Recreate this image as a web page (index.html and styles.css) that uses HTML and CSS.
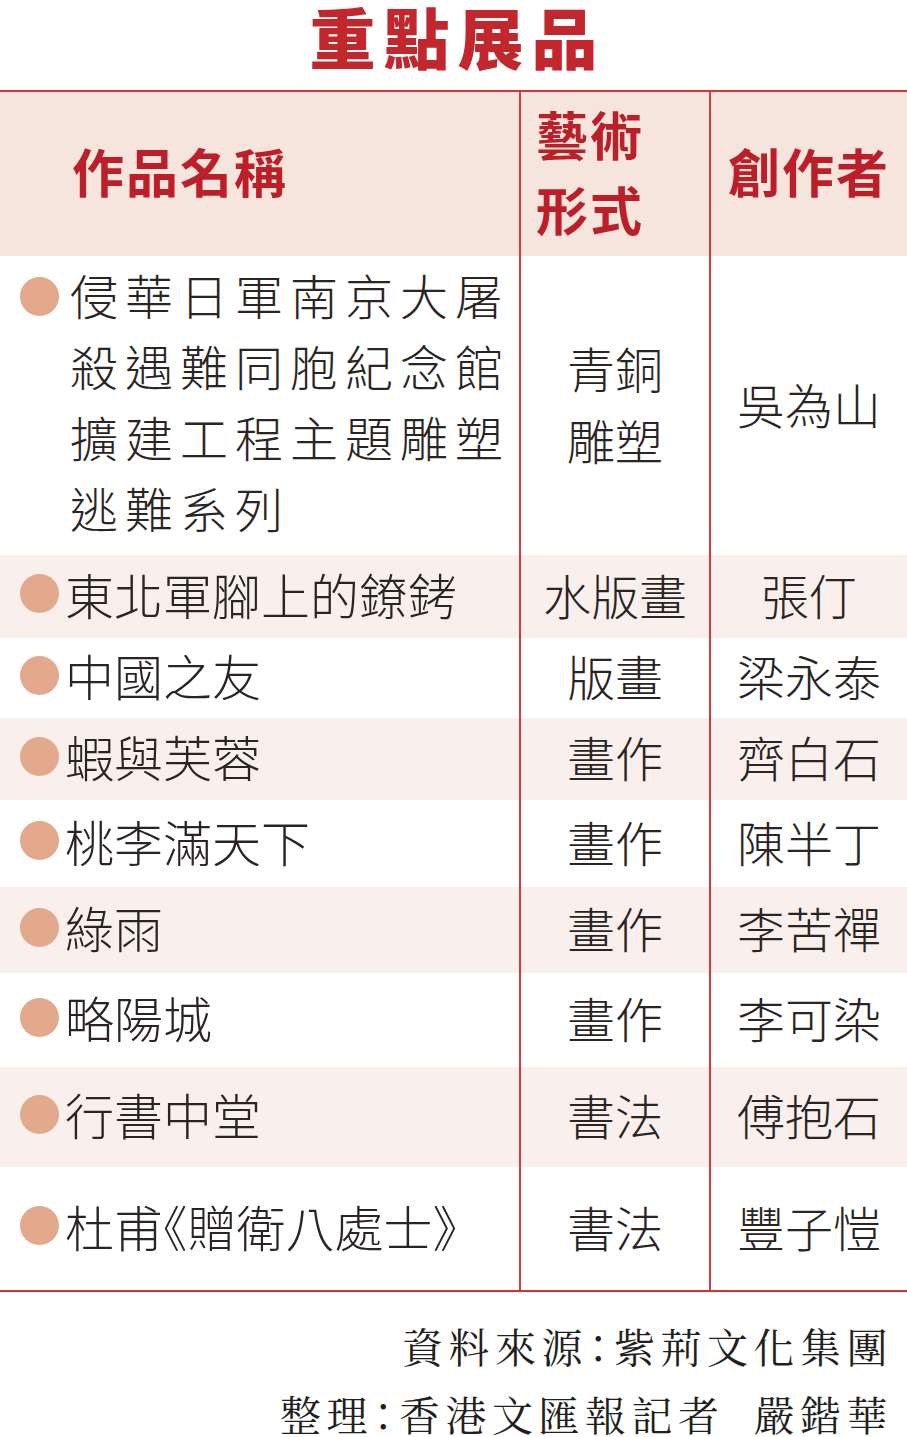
FILE: index.html
```html
<!DOCTYPE html>
<html lang="zh-Hant">
<head>
<meta charset="utf-8">
<title>重點展品</title>
<link rel="stylesheet" href="styles.css">
</head>
<body>
<div class="page">
  <h1 class="title">重點展品</h1>
  <div class="table">
    <div class="row head">
      <div class="cell c1"><span class="h-name">作品名稱</span></div>
      <div class="cell c2 h-left"><span class="h-type">藝術<br>形式</span></div>
      <div class="cell c3"><span class="h-author">創作者</span></div>
    </div>
    <div class="row r1">
      <div class="cell c1">
        <div class="item multi"><span class="dot"></span><span class="name wide">侵華日軍南京大屠殺遇難同胞紀念館擴建工程主題雕塑逃難系列</span></div>
      </div>
      <div class="cell c2"><span class="val lines">青銅<br>雕塑</span></div>
      <div class="cell c3"><span class="val">吳為山</span></div>
    </div>
    <div class="row r2 pink">
      <div class="cell c1"><div class="item"><span class="dot"></span><span class="name">東北軍腳上的鐐銬</span></div></div>
      <div class="cell c2"><span class="val">水版畫</span></div>
      <div class="cell c3"><span class="val">張仃</span></div>
    </div>
    <div class="row r3">
      <div class="cell c1"><div class="item"><span class="dot"></span><span class="name">中國之友</span></div></div>
      <div class="cell c2"><span class="val">版畫</span></div>
      <div class="cell c3"><span class="val">梁永泰</span></div>
    </div>
    <div class="row r4 pink">
      <div class="cell c1"><div class="item"><span class="dot"></span><span class="name">蝦與芙蓉</span></div></div>
      <div class="cell c2"><span class="val">畫作</span></div>
      <div class="cell c3"><span class="val">齊白石</span></div>
    </div>
    <div class="row r5">
      <div class="cell c1"><div class="item"><span class="dot"></span><span class="name">桃李滿天下</span></div></div>
      <div class="cell c2"><span class="val">畫作</span></div>
      <div class="cell c3"><span class="val">陳半丁</span></div>
    </div>
    <div class="row r6 pink">
      <div class="cell c1"><div class="item"><span class="dot"></span><span class="name">綠雨</span></div></div>
      <div class="cell c2"><span class="val">畫作</span></div>
      <div class="cell c3"><span class="val">李苦禪</span></div>
    </div>
    <div class="row r7">
      <div class="cell c1"><div class="item"><span class="dot"></span><span class="name">略陽城</span></div></div>
      <div class="cell c2"><span class="val">畫作</span></div>
      <div class="cell c3"><span class="val">李可染</span></div>
    </div>
    <div class="row r8 pink">
      <div class="cell c1"><div class="item"><span class="dot"></span><span class="name">行書中堂</span></div></div>
      <div class="cell c2"><span class="val">書法</span></div>
      <div class="cell c3"><span class="val">傅抱石</span></div>
    </div>
    <div class="row r9">
      <div class="cell c1"><div class="item"><span class="dot"></span><span class="name">杜甫《贈衛八處士》</span></div></div>
      <div class="cell c2"><span class="val">書法</span></div>
      <div class="cell c3"><span class="val">豐子愷</span></div>
    </div>
  </div>
  <div class="footer">
    <p class="credit">資料來源<span class="colon">：</span>紫荊文化集團</p>
    <p class="credit second">整理<span class="colon">：</span>香港文匯報記者 <span class="author">嚴鍇華</span></p>
  </div>
</div>
</body>
</html>
```

FILE: styles.css
```css
html, body {
  margin: 0;
  padding: 0;
  background: #ffffff;
  overflow: hidden;
}

.page {
  width: 907px;
  height: 1437px;
  font-family: "Noto Sans CJK TC", "Noto Sans CJK SC", sans-serif;
  color: #2a2423;
}

.title {
  margin: 0;
  height: 90px;
  line-height: 70px;
  font-size: 66px;
  font-weight: 900;
  letter-spacing: 8px;
  padding-left: 8px;
  text-align: center;
  color: #c1272d;
}

.table {
  border-top: 2px solid #d3333b;
  border-bottom: 2px solid #d3333b;
}

.row {
  display: grid;
  grid-template-columns: 519px 190px 1fr;
}

.cell {
  display: flex;
  align-items: center;
  padding-bottom: 6px;
}

.c2, .c3 {
  border-left: 2px solid #d83a42;
  justify-content: center;
}

.c1 {
  padding-left: 20px;
}

.head {
  height: 164px;
  background: #f5e5dd;
  color: #bd1f28;
  font-weight: 700;
}

.head .c1 {
  padding-left: 72px;
}

.head .h-left {
  justify-content: flex-start;
  padding-left: 15px;
}

.h-name, .h-author {
  font-size: 52px;
  letter-spacing: 2px;
  line-height: 60px;
}

.h-type {
  font-size: 52px;
  line-height: 75px;
  letter-spacing: 2px;
}

.pink {
  background: #f9f0ed;
}

.r1 { height: 299px; }
.r2 { height: 83px; }
.r3 { height: 80px; }
.r4 { height: 82px; }
.r5 { height: 87px; }
.r6 { height: 86px; }
.r7 { height: 94px; }
.r8 { height: 100px; }
.r9 { height: 123px; }

.r1 .c1 {
  padding-bottom: 10px;
}

.item {
  display: flex;
  align-items: center;
  gap: 6px;
}

.item.multi {
  align-items: flex-start;
  gap: 11px;
}

.dot {
  flex: none;
  width: 39px;
  height: 39px;
  border-radius: 50%;
  background: #e3a98c;
}

.multi .dot {
  margin-top: 18px;
}

.name {
  font-size: 49px;
  line-height: 60px;
  font-weight: 300;
  white-space: nowrap;
  font-feature-settings: "halt";
}

.name.wide {
  white-space: normal;
  font-size: 48px;
  letter-spacing: 7px;
  line-height: 71px;
  width: 445px;
}

.val {
  font-size: 48px;
  line-height: 60px;
  font-weight: 300;
  text-align: center;
}

.val.lines {
  line-height: 72px;
}

.footer {
  padding: 32px 14px 0 0;
  text-align: right;
  font-family: "Noto Serif CJK TC", "Noto Sans CJK TC", serif;
  color: #231f20;
}

.credit {
  margin: 0;
  font-size: 41px;
  letter-spacing: 5.5px;
  line-height: 44px;
}

.credit.second {
  margin-top: 24px;
}

.colon {
  font-feature-settings: "halt";
}

.author {
  margin-left: 13px;
}
```
